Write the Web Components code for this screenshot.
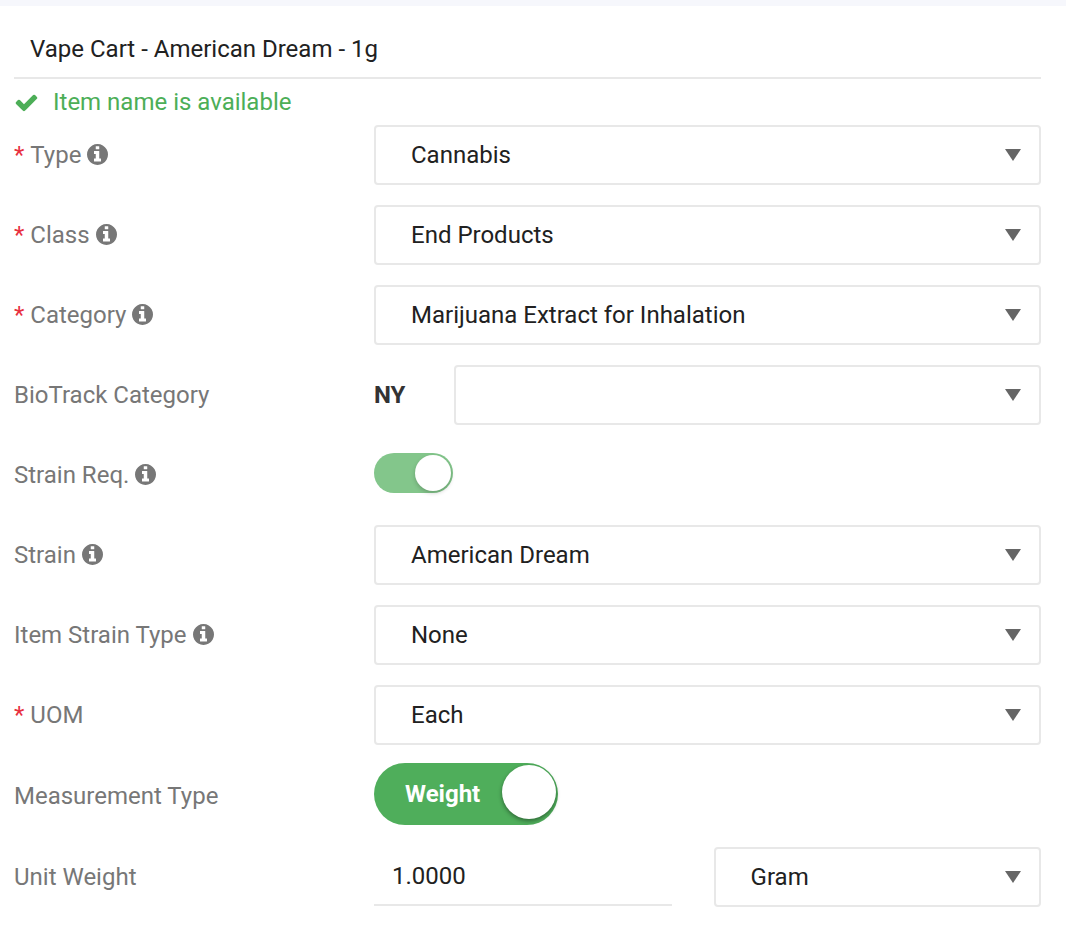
<!DOCTYPE html>
<html lang="en">
<head>
  <meta charset="utf-8">
  <meta name="viewport" content="width=device-width, initial-scale=1">
  <title>Item</title>
  <style>
    body {
      margin: 0;
      background-color: #fff;
      font-family: Roboto, Arial, sans-serif;
      font-size: 24px;
      line-height: 28px;
      color: #212121;
    }
  </style>
</head>
<body>
  <item-form>
    <name-field slot="name" label="Item name" value="Vape Cart - American Dream - 1g">Item name is available</name-field>
    <select-field label="Type" value="Cannabis" required info></select-field>
    <select-field label="Class" value="End Products" required info></select-field>
    <select-field label="Category" value="Marijuana Extract for Inhalation" required info></select-field>
    <select-field label="BioTrack Category" value=""><b slot="prefix">NY</b></select-field>
    <toggle-field label="Strain Req." info muted></toggle-field>
    <select-field label="Strain" value="American Dream" info></select-field>
    <select-field label="Item Strain Type" value="None" info></select-field>
    <select-field label="UOM" value="Each" required></select-field>
    <toggle-field label="Measurement Type">Weight</toggle-field>
    <weight-field label="Unit Weight" value="1.0000" unit="Gram"></weight-field>
  </item-form>

  <script>
    const rowStyle = `
      * {
        box-sizing: border-box;
      }

      :host {
        display: block;
      }

      .row {
        display: grid;
        grid-template-columns: 360px 1fr;
        align-items: center;
        min-height: 60px;
      }
    `;

    const inputStyle = `
      input.text {
        display: block;
        box-sizing: border-box;
        width: 100%;
        height: 59px;
        margin: 0;
        padding: 0 16px;
        border: 0;
        border-bottom: 2px solid #e8e8e8;
        border-radius: 0;
        outline: 0;
        background: none;
        font: inherit;
        color: inherit;
      }
    `;

    // label text with the optional red asterisk and info icon
    class FieldLabel extends HTMLElement {
      constructor() {
        super();
        this.shadowDOM = this.attachShadow({ mode: 'open' });
      }

      connectedCallback() {
        this.shadowDOM.innerHTML = `
        <style>
          :host {
            display: inline-flex;
            align-items: center;
            gap: 6px;
            color: #777;
          }

          .required {
            color: #e8303f;
          }

          svg {
            width: 21px;
            height: 21px;
            margin-bottom: 1px;
            fill: currentColor;
          }
        </style>

        ${this.hasAttribute('required') ? '<span class="required">*</span>' : ''}
        <slot></slot>
        ${this.hasAttribute('info') ? `
        <svg viewBox="128 128 1536 1536" aria-hidden="true">
          <path d="M1152 1376v-160q0-14-9-23t-23-9h-96v-512q0-14-9-23t-23-9h-320q-14 0-23 9t-9 23v160q0 14 9 23t23 9h96v320h-96q-14 0-23 9t-9 23v160q0 14 9 23t23 9h448q14 0 23-9t9-23zM1024 480v-160q0-14-9-23t-23-9h-192q-14 0-23 9t-9 23v160q0 14 9 23t23 9h192q14 0 23-9t9-23zM1664 896q0 209-103 385.5t-279.5 279.5-385.5 103-385.5-103-279.5-279.5-103-385.5 103-385.5 279.5-279.5 385.5-103 385.5 103 279.5 279.5 103 385.5z"/>
        </svg>` : ''}
        `;
      }
    }

    customElements.define('field-label', FieldLabel);

    class BaseField extends HTMLElement {
      constructor() {
        super();
        this.shadowDOM = this.attachShadow({ mode: 'open' });
      }

      connectedCallback() {
        this.render();
      }

      get value() {
        return this.getAttribute('value') || '';
      }

      renderLabel() {
        const required = this.hasAttribute('required') ? 'required' : '';
        const info = this.hasAttribute('info') ? 'info' : '';
        return `<label for="control"><field-label ${required} ${info}>${this.getAttribute('label')}</field-label></label>`;
      }
    }

    // bordered drop-down, shared by the select rows and the unit picker
    const selectStyle = `
      .select {
        position: relative;
        flex: 1;
        min-width: 0;
      }

      select {
        display: block;
        width: 100%;
        height: 60px;
        margin: 0;
        padding: 0 48px 0 35px;
        border: 2px solid #e8e8e8;
        border-radius: 4px;
        appearance: none;
        background-color: #fff;
        font: inherit;
        color: inherit;
      }

      .arrow {
        position: absolute;
        top: 24px;
        right: 20px;
        width: 16px;
        height: 12px;
        fill: #666;
        pointer-events: none;
      }
    `;

    const renderSelect = (value, attributes) => `
      <div class="select">
        <select ${attributes}>
          <option>${value}</option>
        </select>
        <svg class="arrow" viewBox="0 0 16 12" aria-hidden="true"><path d="M0 0h16L8 12z"/></svg>
      </div>
    `;

    class NameField extends BaseField {
      render() {
        this.shadowDOM.innerHTML = `
        <style>
          :host {
            display: block;
          }

          ${inputStyle}

          .status {
            display: flex;
            align-items: center;
            gap: 14px;
            height: 46px;
            color: #4cae57;
          }

          svg {
            width: 25px;
            height: 25px;
            fill: currentColor;
          }
        </style>

        <input class="text" type="text" value="${this.value}" aria-label="${this.getAttribute('label')}">
        <div class="status">
          <svg viewBox="0 0 1792 1792" aria-hidden="true">
            <path d="M1671 566q0 40-28 68l-724 724-136 136q-28 28-68 28t-68-28l-136-136-362-362q-28-28-28-68t28-68l136-136q28-28 68-28t68 28l294 295 656-657q28-28 68-28t68 28l136 136q28 28 28 68z"/>
          </svg>
          <slot></slot>
        </div>
        `;
      }
    }

    customElements.define('name-field', NameField);

    class SelectField extends BaseField {
      render() {
        this.shadowDOM.innerHTML = `
        <style>
          ${rowStyle}
          ${selectStyle}

          .control {
            display: flex;
            align-items: center;
          }

          ::slotted([slot="prefix"]) {
            width: 80px;
            color: #333;
          }
        </style>

        <div class="row">
          ${this.renderLabel()}
          <div class="control">
            <slot name="prefix"></slot>
            ${renderSelect(this.value, 'id="control"')}
          </div>
        </div>
        `;
      }
    }

    customElements.define('select-field', SelectField);

    class ToggleField extends BaseField {
      render() {
        this.shadowDOM.innerHTML = `
        <style>
          ${rowStyle}

          .toggle {
            position: relative;
            display: flex;
            justify-content: space-between;
            justify-self: start;
            width: 184px;
            height: 62px;
            margin: -2px 0 2px;
            padding: 2px;
            border-radius: 31px;
            background-color: #4fae5b;
            color: #fff;
          }

          .text {
            align-self: center;
            padding-left: 29px;
            font-weight: 700;
          }

          .knob {
            width: 54px;
            height: 54px;
            border-radius: 50%;
            background-color: #fff;
            box-shadow: 0 2px 4px rgba(0, 0, 0, 0.4);
          }

          :host([muted]) .toggle {
            width: 79px;
            height: 40px;
            background-color: #83c68b;
          }

          :host([muted]) .knob {
            width: 36px;
            height: 36px;
            box-shadow: 0 2px 4px rgba(0, 0, 0, 0.2);
          }

          input {
            position: absolute;
            inset: 0;
            width: 100%;
            height: 100%;
            margin: 0;
            opacity: 0;
          }
        </style>

        <div class="row">
          ${this.renderLabel()}
          <div class="toggle">
            <span class="text"><slot></slot></span>
            <span class="knob"></span>
            <input id="control" type="checkbox" role="switch" checked>
          </div>
        </div>
        `;
      }
    }

    customElements.define('toggle-field', ToggleField);

    class WeightField extends BaseField {
      render() {
        this.shadowDOM.innerHTML = `
        <style>
          ${rowStyle}
          ${inputStyle}
          ${selectStyle}

          .control {
            display: grid;
            grid-template-columns: 10fr 11fr;
            align-items: start;
            gap: 42px;
          }

          .control input.text {
            padding: 0 18px;
          }
        </style>

        <div class="row">
          ${this.renderLabel()}
          <div class="control">
            <input class="text" id="control" type="text" inputmode="decimal" value="${this.value}">
            ${renderSelect(this.getAttribute('unit'), 'aria-label="Unit"')}
          </div>
        </div>
        `;
      }
    }

    customElements.define('weight-field', WeightField);

    class ItemForm extends HTMLElement {
      constructor() {
        super();
        this.shadowDOM = this.attachShadow({ mode: 'open' });
        this.shadowDOM.innerHTML = `
        <style>
          :host {
            display: block;
            border-top: 6px solid #f6f7fc;
          }

          form {
            padding: 14px 25px 19px 14px;
          }

          .fields {
            display: flex;
            flex-direction: column;
            gap: 20px;
          }
        </style>

        <form>
          <slot name="name"></slot>
          <div class="fields">
            <slot></slot>
          </div>
        </form>
        `;
      }
    }

    customElements.define('item-form', ItemForm);
  </script>
</body>
</html>
